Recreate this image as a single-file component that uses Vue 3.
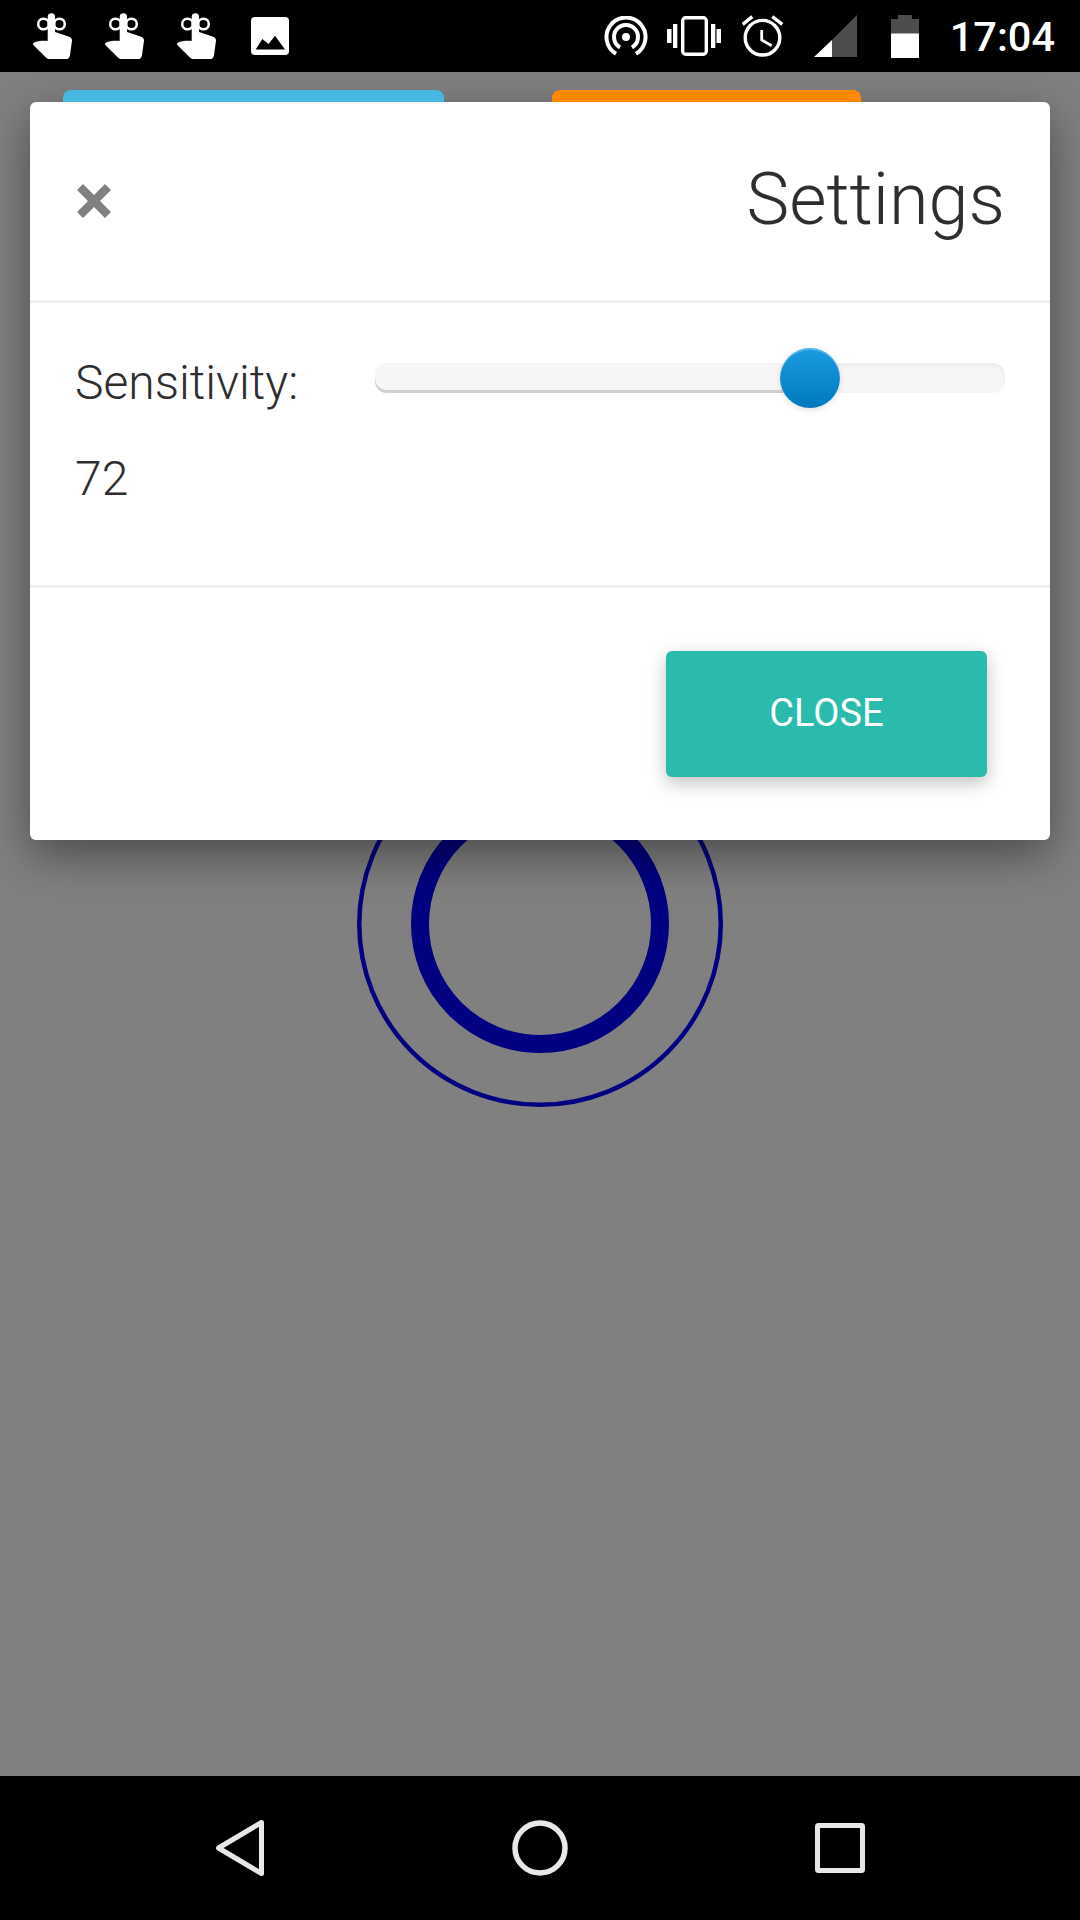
<script setup>
import { ref } from 'vue';

const sensitivity = ref(72);
// thumb centre sits at 435px of the 630px track
const thumbCentre = ref(435);
const hands = [1, 2, 3];
</script>

<template>
  <div class="phone">
    <!-- Android status bar -->
    <div class="status-bar">
      <div class="notif-icons">
        <svg v-for="h in hands" :key="h" class="hand" viewBox="0 0 39 46">
          <circle cx="10.5" cy="11" r="5.3" fill="none" stroke="#fff" stroke-width="2.5"/>
          <circle cx="26.5" cy="11" r="5.3" fill="none" stroke="#fff" stroke-width="2.5"/>
          <path fill="#fff" d="M14.7 4a3.7 3.7 0 0 1 7.4 0V19L35.5 23.5c2 .6 3.5 2 3.500 4L37 42c-.3 2.500-1.500 4-3.500 4H16c-1 0-2-.4-2.800-1.200L.8 32.500c-1-1-1-2.500.4-3 3-1.200 8-2 13.500-1.500Z"/>
        </svg>
        <svg class="picture" viewBox="0 0 38 38">
          <path fill="#fff" fill-rule="evenodd" d="M4 0h30a4 4 0 0 1 4 4v30a4 4 0 0 1-4 4H4a4 4 0 0 1-4-4V4a4 4 0 0 1 4-4ZM4.700 32.500H34L24 18.700 17.500 27 11.300 22Z"/>
        </svg>
      </div>
      <div class="sys-icons">
        <svg class="cast" viewBox="0 0 44 40" fill="none" stroke="#fff" stroke-width="4">
          <path d="M12 37.800A19.500 19.500 0 1 1 32 37.800"/>
          <path d="M16 31.400A12 12 0 1 1 28 31.400"/>
          <circle cx="22" cy="21" r="4" fill="#fff" stroke="none"/>
        </svg>
        <svg class="vibrate" viewBox="0 0 54 40">
          <rect x="15.700" y="1.700" width="23.600" height="36.600" rx="3" fill="none" stroke="#fff" stroke-width="3.400"/>
          <rect x="6" y="8" width="4.300" height="24" fill="#fff"/>
          <rect x="0" y="13" width="4.500" height="14" fill="#fff"/>
          <rect x="44" y="8" width="4.300" height="24" fill="#fff"/>
          <rect x="49.500" y="13" width="4.500" height="14" fill="#fff"/>
        </svg>
        <svg class="alarm" viewBox="0 0 42 42" fill="none" stroke="#fff">
          <circle cx="20.500" cy="22.700" r="17.300" stroke-width="3.400"/>
          <path d="M19.700 15V25L29.700 30.700" stroke-width="2.800"/>
          <path d="M.7 9.300 10.300 1.700M40.300 9.300 30.300 1.700" stroke-width="3.400"/>
        </svg>
        <svg class="signal" viewBox="0 0 43 42">
          <path fill="#4d4d4d" d="M43 0v42H18V25Z"/>
          <path fill="#fff" d="M18 25v17H0Z"/>
        </svg>
        <svg class="battery" viewBox="0 0 28 43">
          <path fill="#4d4d4d" d="M7 0h14v4h7v15H0V4h7Z"/>
          <rect x="0" y="18.500" width="28" height="24.500" fill="#fff"/>
        </svg>
        <span class="clock">17:04</span>
      </div>
    </div>

    <!-- page behind the dialog, dimmed -->
    <div class="stage">
      <div class="modal-shadow"></div>
      <div class="page-buttons">
        <div class="page-btn blue"></div>
        <div class="page-btn orange"></div>
      </div>
      <svg class="rings" viewBox="0 0 372 372" fill="none" stroke="#000080">
        <circle cx="186" cy="186" r="180.750" stroke-width="4.500"/>
        <circle cx="186" cy="186" r="120" stroke-width="18"/>
      </svg>

      <div class="modal">
        <div class="modal-header">
          <svg class="close-x" viewBox="0 0 34 34">
            <path fill="#808080" d="M6 0l11 11L28 0l6 6-11 11 11 11-6 6-11-11L6 34l-6-6 11-11L0 6Z"/>
          </svg>
          <h4 class="modal-title">Settings</h4>
        </div>
        <div class="modal-body">
          <div class="row">
            <span class="label">Sensitivity:</span>
            <div class="track">
              <div class="fill" :style="{ width: thumbCentre + 'px' }"></div>
              <div class="thumb" :style="{ left: thumbCentre - 30 + 'px' }"></div>
            </div>
          </div>
          <div class="value">{{ sensitivity }}</div>
        </div>
        <div class="modal-footer">
          <button class="close-btn">CLOSE</button>
        </div>
      </div>
    </div>

    <!-- Android nav bar -->
    <div class="nav-bar">
      <svg class="nav-icon" viewBox="0 0 48 56" width="48" height="56" fill="none" stroke="#e8e8e8" stroke-width="5" stroke-linejoin="round">
        <path d="M45.500 2.500v51L2.500 28Z"/>
      </svg>
      <svg class="nav-icon" viewBox="0 0 56 56" width="56" height="56" fill="none" stroke="#e8e8e8" stroke-width="5.500">
        <circle cx="28" cy="28" r="25"/>
      </svg>
      <svg class="nav-icon" viewBox="0 0 50 50" width="50" height="50" fill="none" stroke="#e8e8e8" stroke-width="5" stroke-linejoin="round">
        <rect x="2.500" y="2.500" width="45" height="45" rx="1"/>
      </svg>
    </div>
  </div>
</template>

<style>
html, body {
  margin: 0;
  background: #000;
}
</style>

<style scoped>
.phone {
  width: 1080px;
  height: 1920px;
  display: flex;
  flex-direction: column;
  font-family: Roboto, "Liberation Sans", sans-serif;
  overflow: hidden;
}

.status-bar {
  height: 72px;
  background: #000;
  display: flex;
  justify-content: space-between;
  align-items: center;
  padding: 0 25px 0 33px;
}

.notif-icons {
  display: flex;
  align-items: center;
  gap: 33px;
}

.hand {
  width: 39px;
  height: 46px;
}

.picture {
  width: 38px;
  height: 38px;
  margin-left: 2px;
}

.sys-icons {
  display: flex;
  align-items: center;
}

.cast {
  width: 44px;
  height: 40px;
}

.vibrate {
  width: 54px;
  height: 40px;
  margin-left: 19px;
}

.alarm {
  width: 42px;
  height: 42px;
  margin-left: 21px;
}

.signal {
  width: 43px;
  height: 42px;
  margin-left: 30px;
}

.battery {
  width: 28px;
  height: 43px;
  margin-left: 34px;
}

.clock {
  color: #fff;
  font-size: 41.5px;
  font-weight: 500;
  margin-left: 31px;
}

.stage {
  flex: 1;
  position: relative;
  background: #808080;
}

.page-buttons {
  position: relative;
  z-index: 1;
  display: flex;
  gap: 108px;
  padding: 18px 0 0 63px;
}

.page-btn {
  height: 60px;
  border-radius: 8px;
}

.blue {
  width: 381px;
  background: #47b8e4;
}

.orange {
  width: 309px;
  background: #ff8800;
}

.rings {
  display: block;
  width: 372px;
  height: 372px;
  margin: 588px auto 0;
}

/* shadow sits under the page buttons, the dialog itself on top of them */
.modal-shadow,
.modal {
  position: absolute;
  top: 30px;
  left: 30px;
  width: 1020px;
  height: 738px;
  border-radius: 6px;
}

.modal-shadow {
  box-shadow: 0 15px 45px rgba(0, 0, 0, 0.42);
}

.modal {
  z-index: 2;
  background: #fff;
  display: flex;
  flex-direction: column;
  color: #2e2e2e;
}

.modal-header {
  height: 201px;
  box-sizing: border-box;
  border-bottom: 3px solid #eef0f2;
  display: flex;
  align-items: center;
  justify-content: space-between;
  padding: 0 45px 0 47px;
}

.close-x {
  width: 34px;
  height: 34px;
}

.modal-title {
  margin: 0 0 4px;
  font-size: 72px;
  font-weight: 300;
}

.modal-body {
  height: 285px;
  box-sizing: border-box;
  border-bottom: 3px solid #eef0f2;
  padding: 30px 45px 0;
}

.row {
  display: flex;
  align-items: center;
  height: 90px;
}

.label {
  width: 300px;
  padding-top: 8px;
  font-size: 48px;
  font-weight: 300;
}

.track {
  position: relative;
  width: 630px;
  height: 30px;
  border-radius: 12px;
  background: #f6f6f6;
  box-shadow: inset 0 3px 4px rgba(0, 0, 0, 0.04);
}

.fill {
  height: 30px;
  border-radius: 12px 0 0 12px;
  background: #f6f6f6;
  box-shadow: inset 0 -3px 0 #d0d0d0;
}

.thumb {
  position: absolute;
  top: -15px;
  width: 60px;
  height: 60px;
  border-radius: 50%;
  background: linear-gradient(#1a9be0, #0079bd);
  box-shadow: 0 2px 6px rgba(0, 0, 0, 0.12), inset 0 2px 0 rgba(255, 255, 255, 0.25);
}

.value {
  margin-top: 27px;
  font-size: 48px;
  font-weight: 300;
}

.modal-footer {
  flex: 1;
  display: flex;
  justify-content: flex-end;
  align-items: flex-start;
  padding: 63px 63px 0 0;
}

.close-btn {
  width: 321px;
  height: 126px;
  padding: 0 0 2px;
  border: none;
  border-radius: 6px;
  background: #2bbbad;
  color: #fff;
  font-family: inherit;
  font-size: 38px;
  box-shadow: 0 6px 18px rgba(0, 0, 0, 0.25);
}

.nav-bar {
  height: 144px;
  background: #000;
  display: grid;
  grid-template-columns: 216px 48px 248px 56px 247px 50px;
  align-items: center;
}

.nav-icon:nth-child(1) {
  grid-column: 2;
}

.nav-icon:nth-child(2) {
  grid-column: 4;
}

.nav-icon:nth-child(3) {
  grid-column: 6;
}
</style>
